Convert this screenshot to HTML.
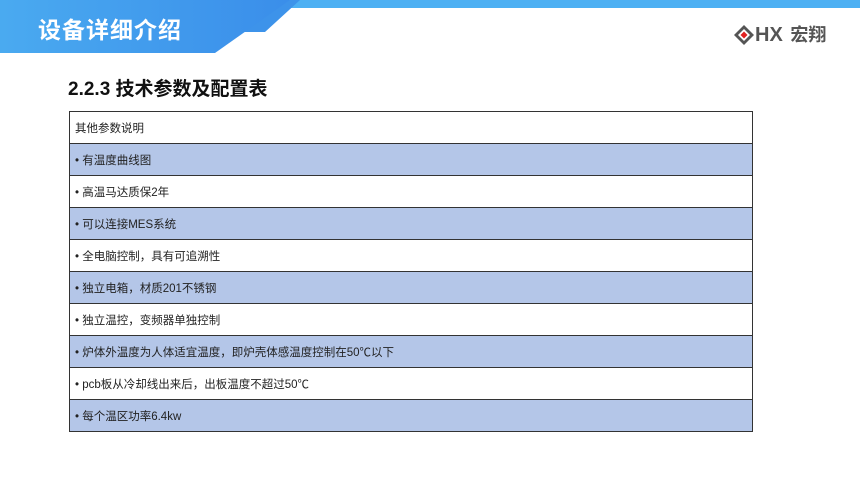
<!DOCTYPE html>
<html><head><meta charset="utf-8"><style>
body{margin:0;width:860px;height:484px;background:#fff;position:relative;overflow:hidden;font-family:"Liberation Sans","Noto Sans CJK SC",sans-serif}
.t{position:absolute;left:38px;top:11px;color:#fff;font-size:23px;font-weight:bold;letter-spacing:1px}
h2{position:absolute;left:68px;top:74px;margin:0;font-size:19px;font-weight:bold;color:#111}
table{position:absolute;left:69px;top:111px;width:684px;border-collapse:collapse}
td{border:1px solid #333;height:31px;padding:3px 0 0 5px;font-size:11.5px;line-height:14px;color:#222;box-sizing:border-box}
tr{height:32px}
tr:nth-child(even) td{background:#b4c6e8}
</style></head><body>
<svg width="860" height="60" style="position:absolute;left:0;top:0">
<defs><linearGradient id="g" x1="0" x2="1"><stop offset="0" stop-color="#4aaaf0"/><stop offset="1" stop-color="#3a8eea"/></linearGradient></defs>
<rect x="0" y="0" width="860" height="8" fill="#4db0f3"/>
<polygon points="0,0 300,0 265,32 0,32" fill="#3d93ea"/>
<polygon points="0,0 290,0 215,53 0,53" fill="url(#g)"/>
</svg>
<div class="t">设备详细介绍</div>
<svg width="22" height="22" style="position:absolute;left:733px;top:24px" viewBox="0 0 22 22">
<polygon points="11,1 21,11 11,21 1,11" fill="#555"/><polygon points="11,5 17,11 11,17 5,11" fill="#fff"/><polygon points="11,7.5 14.5,11 11,14.5 7.5,11" fill="#e02020"/>
</svg>
<div style="position:absolute;left:755px;top:21px;font-size:20px;font-weight:bold;color:#555;white-space:nowrap">HX <span style="font-size:18px;margin-left:2px">宏翔</span></div>
<h2>2.2.3 技术参数及配置表</h2>
<table>
<tr><td>其他参数说明</td></tr>
<tr><td>• 有温度曲线图</td></tr>
<tr><td>• 高温马达质保2年</td></tr>
<tr><td>• 可以连接MES系统</td></tr>
<tr><td>• 全电脑控制，具有可追溯性</td></tr>
<tr><td>• 独立电箱，材质201不锈钢</td></tr>
<tr><td>• 独立温控，变频器单独控制</td></tr>
<tr><td>• 炉体外温度为人体适宜温度，即炉壳体感温度控制在50℃以下</td></tr>
<tr><td>• pcb板从冷却线出来后，出板温度不超过50℃</td></tr>
<tr><td>• 每个温区功率6.4kw</td></tr>
</table>
</body></html>
